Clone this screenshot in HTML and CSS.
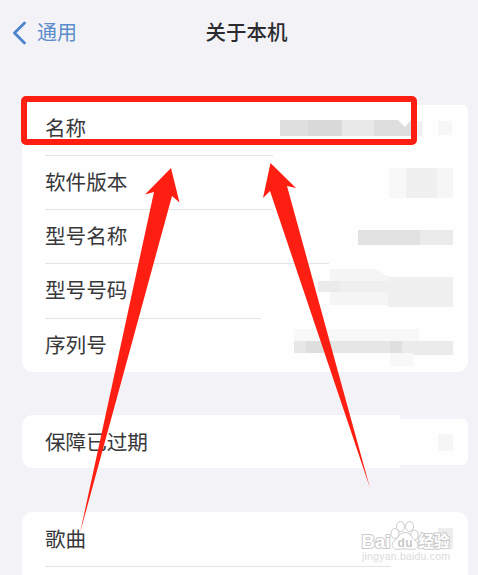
FILE: index.html
```html
<!DOCTYPE html>
<html lang="zh-CN">
<head>
  <meta charset="UTF-8">
  <meta name="viewport" content="width=device-width, initial-scale=1.0">
  <title>关于本机</title>
  <link rel="stylesheet" href="styles.css">
</head>
<body>
  <div class="screen">
    <header class="navbar">
      <a class="back">
        <svg class="chevron" width="14" height="24" viewBox="0 0 14 24"><path d="M12.500 2 2.500 12 12.500 22"/></svg>
        <span>通用</span>
      </a>
      <h1>关于本机</h1>
    </header>

    <main class="groups">
      <section class="group">
        <div class="row">
          <span class="label">名称</span>
          <svg class="value" width="210" height="54" viewBox="0 0 210 54">
            <path fill="#f3f3f7" d="M159 0h51v4h-51z"/>
            <path fill="#dfdfdf" d="M22 19h28v16H22z"/>
            <path fill="#d9d9d9" d="M50 19h34v16H50z"/>
            <path fill="#e9e9e9" d="M84 19h32v16H84z"/>
            <path fill="#dedede" d="M116 19h24l7 7 6-7v16h-37z"/>
            <path fill="#f0f0f0" d="M159 20h5v15h-5z"/>
            <path fill="#f7f7f7" d="M180 20h14v14h-14z"/>
          </svg>
        </div>
        <div class="row line-short">
          <span class="label">软件版本</span>
          <svg class="value" width="210" height="54" viewBox="0 0 210 54">
            <path fill="#f8f8f8" d="M131 13h17v30h-17z"/>
            <path fill="#f0f0f0" d="M148 13h31v30h-31z"/>
            <path fill="#f6f6f6" d="M179 13h16v30h-16z"/>
          </svg>
        </div>
        <div class="row line-short">
          <span class="label">型号名称</span>
          <svg class="value" width="210" height="54" viewBox="0 0 210 54">
            <path fill="#e2e2e2" d="M100 21h62v15h-62z"/>
            <path fill="#ebebeb" d="M162 21h33v15h-33z"/>
          </svg>
        </div>
        <div class="row line-long">
          <span class="label">型号号码</span>
          <svg class="value" width="210" height="54" viewBox="0 0 210 54">
            <path fill="#f5f5f5" d="M72 6h45l14 8v28H72z"/>
            <path fill="#ebebeb" d="M60 18h22v11H60z"/>
            <path fill="#efefef" d="M82 18h48v11H82z"/>
            <path fill="#f0f0f0" d="M130 14h65v30h-65z"/>
          </svg>
        </div>
        <div class="row line-shorter">
          <span class="label">序列号</span>
          <svg class="value" width="210" height="54" viewBox="0 0 210 54">
            <path fill="#f8f8f8" d="M36 11h125v12H36z"/>
            <path fill="#e7e7e7" d="M36 23h12v12H36z"/>
            <path fill="#dedede" d="M48 23h18v12H48z"/>
            <path fill="#e6e6e6" d="M66 23h66v12H66z"/>
            <path fill="#dfdfdf" d="M132 23h12v12h-12z"/>
            <path fill="#f8f8f8" d="M132 35h24v13h-24z"/>
            <path fill="#ebebeb" d="M144 23h51v14h-39v-2h-12z"/>
          </svg>
        </div>
      </section>

      <section class="group warranty">
        <div class="row">
          <span class="label">保障已过期</span>
          <svg class="value" width="210" height="53" viewBox="0 0 210 53">
            <path fill="#f5f5f9" d="M142 0h68v4h-68zM142 50h68v3h-68z"/>
            <path fill="#f6f6f6" d="M180 19h15v17h-15z"/>
          </svg>
        </div>
      </section>

      <section class="group">
        <div class="row">
          <span class="label">歌曲</span>
          <svg class="value" width="210" height="54" viewBox="0 0 210 54">
            <path fill="#eeeeee" d="M180 16h15v21h-15z"/>
          </svg>
        </div>
        <div class="row line-full"></div>
      </section>
    </main>

    <div class="highlight"></div>

    <svg class="arrows" width="478" height="575" viewBox="0 0 478 575">
      <path d="M171 168 179.500 202.500 172 196 80 533 154 192 145 194.500z"/>
      <path d="M270.500 163 296 188 287 186 370 488 270 191 263 198z"/>
    </svg>

    <svg class="watermark" width="98" height="48" viewBox="0 0 98 48">
      <text class="brand" x="3.500" y="30" textLength="29" lengthAdjust="spacingAndGlyphs">Bai</text>
      <g class="paw">
        <ellipse cx="37" cy="15.500" rx="4" ry="5"/>
        <ellipse cx="42.500" cy="8.500" rx="4" ry="5"/>
        <ellipse cx="51.500" cy="8.500" rx="4" ry="5"/>
        <ellipse cx="56.500" cy="17" rx="3.800" ry="5"/>
        <path d="M47 14.500c-5 0-6 4-9 7-3 2-5 5-3 8 2 2.500 5 2 8 1.500h8c3 .5 6 1 8-1.500 2-3 0-6-3-8-3-3-4-7-9-7z"/>
      </g>
      <text class="du" x="39.500" y="28.500" textLength="15">du</text>
      <text class="brand cn" x="60.500" y="29" textLength="31">经验</text>
      <text class="url" x="4" y="42" textLength="88">jingyan.baidu.com</text>
    </svg>
  </div>
</body>
</html>
```

FILE: styles.css
```css
* {
  box-sizing: border-box;
}

body {
  margin: 0;
  background: #f3f3f7;
  color: #38383a;
  font-family: "Liberation Sans", "Noto Sans CJK SC", sans-serif;
}

.screen {
  position: relative;
  width: 478px;
  height: 575px;
  overflow: hidden;
}

.navbar {
  display: grid;
  grid-template-columns: 1fr auto 1fr;
  align-items: center;
  height: 64px;
  padding: 1px 0 0 12px;
}

.navbar h1 {
  margin: 0;
  padding-left: 3px;
  font-size: 20.5px;
  font-weight: 500;
  line-height: 30px;
  color: #2b2b2f;
}

.back {
  display: flex;
  align-items: center;
  gap: 11px;
  font-size: 20px;
  line-height: 30px;
  color: #5b8dcb;
}

.chevron {
  fill: none;
  stroke: #4c85cf;
  stroke-width: 2.8;
  stroke-linecap: round;
  stroke-linejoin: round;
}

.groups {
  display: flex;
  flex-direction: column;
  gap: 43.3px;
  padding: 36.5px 10px 0 22px;
}

.group {
  overflow: hidden;
  border-radius: 11px;
  background: #fefefe;
}

.row {
  display: flex;
  justify-content: space-between;
  height: 54.3px;
  margin-left: 23px;
  background: linear-gradient(#e4e4e6, #e4e4e6) no-repeat;
  background-size: 0 1px;
}

.warranty .row {
  height: 53px;
}

.row.line-short {
  background-size: 228px 1px;
}

.row.line-shorter {
  background-size: 216px 1px;
}

.row.line-long {
  background-size: 284px 1px;
}

.row.line-full {
  background-size: 346px 1px;
}

.label {
  font-size: 20.6px;
  line-height: 56px;
  white-space: nowrap;
}

.value {
  flex: none;
}

.highlight {
  position: absolute;
  left: 21px;
  top: 96px;
  width: 396px;
  height: 49px;
  border: 6px solid #ff1f12;
  border-radius: 5px;
}

.arrows {
  position: absolute;
  left: 0;
  top: 0;
  fill: #ff1f12;
}

.watermark {
  position: absolute;
  left: 358px;
  top: 518px;
}

.watermark .paw,
.watermark text {
  fill: #fff;
  stroke: #cbcbcb;
  stroke-width: 1;
}

.watermark .brand {
  font-size: 19px;
  font-weight: 700;
  paint-order: stroke;
  stroke-width: 2;
}

.watermark .cn {
  font-size: 15.5px;
}

.watermark .du {
  font-size: 12px;
  font-weight: 700;
  fill: #c8c8c8;
  stroke: none;
}

.watermark .url {
  font-size: 10.5px;
  fill: #dcdcdc;
  stroke: none;
}
```
